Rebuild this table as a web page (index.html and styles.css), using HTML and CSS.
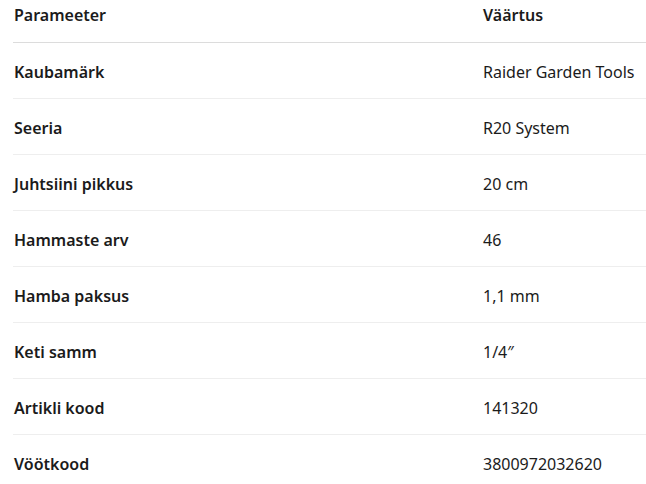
FILE: index.html
```html
<!DOCTYPE html>
<html lang="et">
<head>
<meta charset="utf-8">
<link rel="stylesheet" href="styles.css">
</head>
<body>
<table class="spec">
  <thead>
    <tr><th class="param">Parameeter</th><th class="value">Väärtus</th></tr>
  </thead>
  <tbody>
    <tr><td class="param">Kaubamärk</td><td class="value">Raider Garden Tools</td></tr>
    <tr><td class="param">Seeria</td><td class="value">R20 System</td></tr>
    <tr><td class="param">Juhtsiini pikkus</td><td class="value">20 cm</td></tr>
    <tr><td class="param">Hammaste arv</td><td class="value">46</td></tr>
    <tr><td class="param">Hamba paksus</td><td class="value">1,1 mm</td></tr>
    <tr><td class="param">Keti samm</td><td class="value">1/4″</td></tr>
    <tr><td class="param">Artikli kood</td><td class="value">141320</td></tr>
    <tr><td class="param">Vöötkood</td><td class="value">3800972032620</td></tr>
  </tbody>
</table>
</body>
</html>
```
FILE: styles.css
```css
html, body { margin: 0; padding: 0; background: #fff; }
body {
  font-family: "Noto Sans", "Open Sans", sans-serif;
  font-size: 16px;
  color: #1b1b1b;
  padding-left: 13px;
}
.spec {
  border-collapse: collapse;
  width: 633px;
}
.spec th, .spec td {
  text-align: left;
  padding: 0;
  line-height: 22px;
}
.spec th {
  font-weight: 600;
  padding-top: 4px;
  padding-bottom: 16px;
  border-bottom: 1px solid #dcdcdc;
}
.spec td {
  padding-top: 18px;
  padding-bottom: 15px;
  border-bottom: 1px solid #eeeeee;
}
.spec td.param { font-weight: 600; }
.param { width: 469px; padding-left: 1px !important; }
.value { font-weight: 400; }
```
